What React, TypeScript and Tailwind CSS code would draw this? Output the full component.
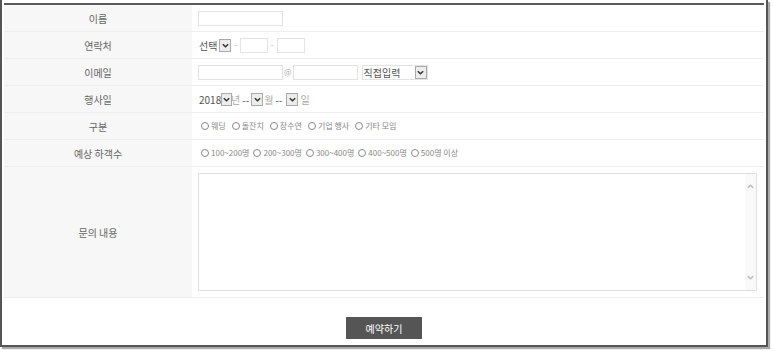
import React from 'react';

const font = { fontFamily: '"Noto Sans CJK KR", "Noto Sans", sans-serif' };

function Chevron({ up = false, className = '' }: { up?: boolean; className?: string }) {
  return (
    <svg viewBox="0 0 10 10" className={className} fill="none" stroke="currentColor" strokeWidth="1.6">
      {up ? <path d="M2 6.5 L5 3.5 L8 6.5" /> : <path d="M2 3.5 L5 6.5 L8 3.5" />}
    </svg>
  );
}

function FakeSelect({ label, width }: { label: string; width: string }) {
  return (
    <div className={`flex items-center justify-between ${width}`}>
      <span className="pl-[1px] text-[10px] text-[#555]">{label}</span>
      <span className="flex h-[13px] w-[12px] items-center justify-center border border-[#aaa] bg-[#ececec] text-[#333]">
        <Chevron className="h-[9px] w-[9px]" />
      </span>
    </div>
  );
}

function TextBox({ width }: { width: string }) {
  return <div className={`h-[15px] border border-[#e3e3e3] bg-white ${width}`} />;
}

function Radio({ label }: { label: string }) {
  return (
    <label className="flex items-center gap-[2px]">
      <span className="h-[8px] w-[8px] rounded-full border border-[#888] bg-white" />
      <span>{label}</span>
    </label>
  );
}

function Row({ label, children, tall = false }: { label: string; children: React.ReactNode; tall?: boolean }) {
  return (
    <div className={`flex border-b border-[#efefef] ${tall ? 'h-[131px]' : 'h-[27px]'}`}>
      <div className="flex w-[188px] items-center justify-center bg-[#f7f7f7] text-[10px] text-[#666]">{label}</div>
      <div className="flex flex-1 items-center pl-[6px] text-[8px] text-[#888]">{children}</div>
    </div>
  );
}

export default function App() {
  return (
    <div className="h-[351px] w-[773px] bg-white" style={font}>
      <div className="h-[347px] w-[768px] border-x-2 border-b-2 border-[#555] bg-white pt-[3px] pl-[2px] shadow-[2px_2px_1px_#aaa]">
        <div className="w-[760px] border-t-2 border-[#5a5a5a]">
          <Row label="이름">
            <TextBox width="w-[85px]" />
          </Row>
          <Row label="연락처">
            <FakeSelect label="선택" width="w-[33px]" />
            <span className="mx-[3px] text-[#aaa]">-</span>
            <TextBox width="w-[28px]" />
            <span className="mx-[3px] text-[#aaa]">-</span>
            <TextBox width="w-[28px]" />
          </Row>
          <Row label="이메일">
            <TextBox width="w-[85px]" />
            <span className="mx-[1px] text-[#aaa]">@</span>
            <TextBox width="w-[65px]" />
            <div className="ml-[4px] flex h-[15px] w-[66px] items-center justify-between border border-[#e3e3e3] pl-[1px]">
              <span className="text-[10px] text-[#555]">직접입력</span>
              <span className="flex h-[13px] w-[12px] items-center justify-center border border-[#aaa] bg-[#ececec] text-[#333]">
                <Chevron className="h-[9px] w-[9px]" />
              </span>
            </div>
          </Row>
          <Row label="행사일">
            <FakeSelect label="2018" width="w-[32px]" />
            <span className="mx-[1px] text-[10px] text-[#aaa]">년</span>
            <FakeSelect label="--" width="w-[22px]" />
            <span className="mx-[1px] text-[10px] text-[#aaa]">월</span>
            <FakeSelect label="--" width="w-[24px]" />
            <span className="ml-[2px] text-[10px] text-[#aaa]">일</span>
          </Row>
          <Row label="구분">
            <div className="flex items-center gap-[6px] pl-[3px]">
              <Radio label="웨딩" />
              <Radio label="돌잔치" />
              <Radio label="장수연" />
              <Radio label="기업 행사" />
              <Radio label="기타 모임" />
            </div>
          </Row>
          <Row label="예상 하객수">
            <div className="flex items-center gap-[4px] pl-[3px]">
              <Radio label="100~200명" />
              <Radio label="200~300명" />
              <Radio label="300~400명" />
              <Radio label="400~500명" />
              <Radio label="500명 이상" />
            </div>
          </Row>
          <Row label="문의 내용" tall>
            <div className="flex h-[118px] w-[559px] justify-end border border-[#e0e0e0] bg-white">
              <div className="flex w-[11px] flex-col items-center justify-between bg-[#f9f9f9] py-[8px] text-[#bbb]">
                <Chevron up className="h-[9px] w-[9px]" />
                <Chevron className="h-[9px] w-[9px]" />
              </div>
            </div>
          </Row>
          <div className="flex justify-center pt-[19px]">
            <button className="h-[22px] w-[76px] bg-[#555] text-[10px] text-white">예약하기</button>
          </div>
        </div>
      </div>
    </div>
  );
}
